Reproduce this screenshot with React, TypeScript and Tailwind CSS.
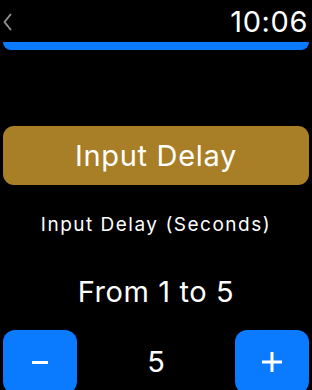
import React from "react";

const App = () => {
  return (
    <div
      className="w-[312px] h-[390px] overflow-hidden bg-black text-white flex flex-col"
      style={{ fontFamily: "Inter, 'Open Sans', sans-serif" }}
    >
      <div className="shrink-0 h-[42px] flex flex-row items-start justify-between px-[3px]">
        <svg width="9" height="18" viewBox="0 0 9 18" className="mt-[13px]">
          <path d="M7.5 1.5 L1.5 9 L7.5 16.5" fill="none" stroke="#8e8e93" strokeWidth="2" strokeLinecap="round" strokeLinejoin="round" />
        </svg>
        <span className="text-[29px] leading-none mt-[7px] mr-[1px] tracking-[0.6px]">10:06</span>
      </div>
      <div className="shrink-0 mx-[3px] h-[8px] bg-[#0a7aff] rounded-b-[9px]" />

      <div className="shrink-0 mt-[76px] mx-[3px] h-[59px] rounded-[11px] bg-[#a87f27] flex items-center justify-center">
        <span className="text-[29px] tracking-[0.7px]">Input Delay</span>
      </div>

      <div className="shrink-0 mt-[26px] text-center text-[19px] tracking-[1.5px]">Input Delay (Seconds)</div>

      <div className="shrink-0 mt-[30px] text-center text-[29px] tracking-[0.6px]">From 1 to 5</div>

      <div className="shrink-0 mt-[17px] px-[3px] flex flex-row items-center justify-between">
        <button className="w-[74px] h-[64px] rounded-[12px] bg-[#0a7aff] flex items-center justify-center">
          <span className="block w-[16px] h-[3px] bg-white" />
        </button>
        <span className="text-[29px]">5</span>
        <button className="w-[74px] h-[64px] rounded-[12px] bg-[#0a7aff] flex items-center justify-center">
          <svg width="24" height="24" viewBox="0 0 24 24">
            <path d="M12 2 V22 M2 12 H22" stroke="white" strokeWidth="3" />
          </svg>
        </button>
      </div>
    </div>
  );
};

export default App;
